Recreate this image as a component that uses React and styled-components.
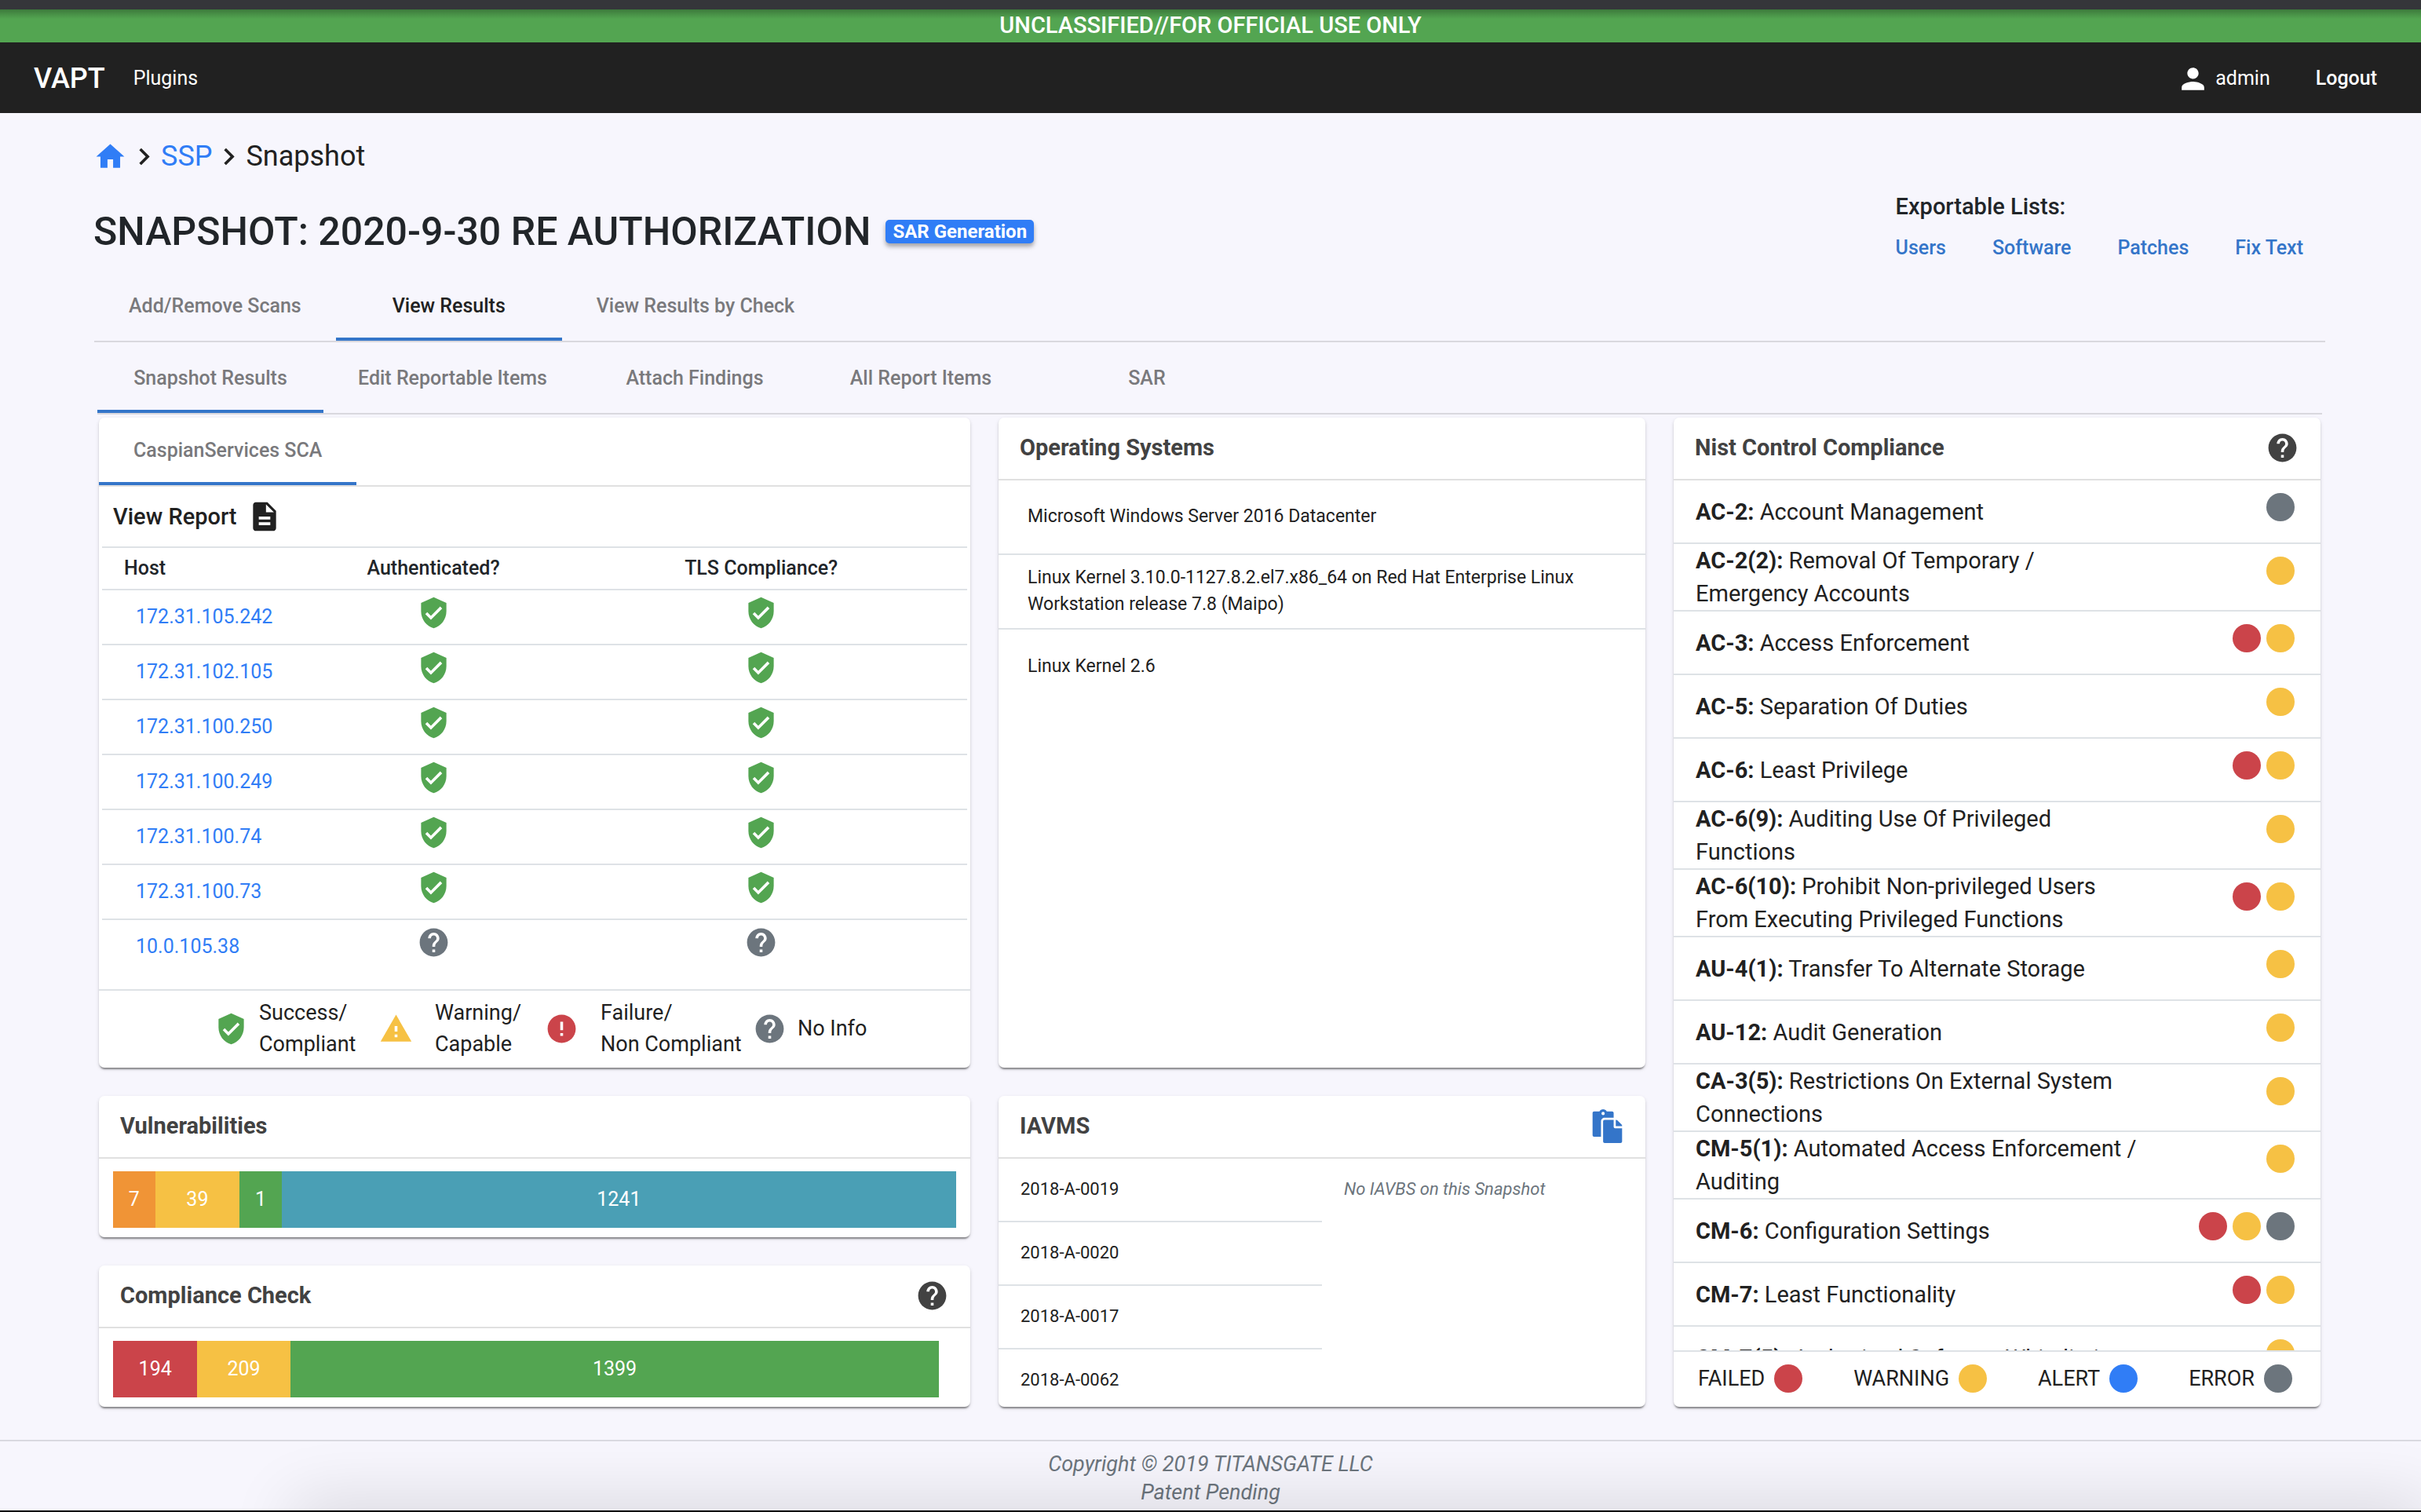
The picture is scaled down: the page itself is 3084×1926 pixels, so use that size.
import React from "react";
import styled, { createGlobalStyle } from "styled-components";
import {
  MdHome,
  MdChevronRight,
  MdPerson,
  MdDescription,
  MdVerifiedUser,
  MdHelp,
  MdWarning,
  MdError,
} from "react-icons/md";
import { FaPaste } from "react-icons/fa";

const color = {
  page: "#f7f6fd",
  ink: "#212121",
  heading: "#212529",
  cardTitle: "#424242",
  mutedTab: "#79797c",
  muted: "#6c757d",
  link: "#307df6",
  accent: "#3475c9",
  green: "#53a551",
  yellow: "#f6c144",
  orange: "#f09436",
  red: "#cb444a",
  teal: "#4a9fb5",
  grey: "#6c757d",
  rule: "#dee2e6",
  headRule: "#e0e0e0",
};

const GlobalStyle = createGlobalStyle`
  *, *::before, *::after { box-sizing: border-box; }
  body {
    margin: 0;
    background: ${color.page};
    color: ${color.ink};
    font-family: Roboto, "Liberation Sans", sans-serif;
    font-size: 25px;
    line-height: 36px;
    overflow: hidden;
  }
  a { color: inherit; text-decoration: none; }
  button { font: inherit; color: inherit; background: none; border: 0; padding: 0; cursor: pointer; }
  h1, h2, p, ul { margin: 0; padding: 0; }
  ul { list-style: none; }
  svg { display: block; flex: none; }
`;

const Chrome = styled.div`
  height: 12px;
  background: #35363a;
`;

const Banner = styled.div`
  height: 42px;
  display: flex;
  align-items: center;
  justify-content: center;
  background: linear-gradient(#3d7a3c, ${color.green} 12px);
  color: #fff;
  font-size: 29px;
  font-weight: 500;
  padding-bottom: 2px;
`;

const Navbar = styled.nav`
  height: 90px;
  padding: 2px 56px 0 43px;
  display: flex;
  align-items: center;
  background: ${color.ink};
  color: #fff;
`;

const Brand = styled.a`
  font-size: 36px;
  font-weight: 500;
  margin-right: 36px;
`;

const NavLink = styled.a`
  font-weight: ${(p) => (p.$strong ? 500 : 400)};
`;

const NavEnd = styled.div`
  margin-left: auto;
  display: flex;
  align-items: center;
  gap: 58px;
`;

const UserLink = styled.a`
  display: flex;
  align-items: center;
  gap: 7px;
`;

const Main = styled.main`
  padding: 32px 122px 42px 119px;
`;

const Breadcrumb = styled.nav`
  display: flex;
  align-items: center;
  height: 46px;
  font-size: 36px;
`;

const HomeLink = styled.a`
  color: ${color.link};
`;

const CrumbLink = styled.a`
  color: ${color.link};
`;

const TitleRow = styled.header`
  display: flex;
  align-items: center;
  justify-content: space-between;
  height: 126px;
  padding-right: 28px;
`;

const TitleGroup = styled.div`
  display: flex;
  align-items: center;
  gap: 19px;
  padding-top: 19px;
`;

const Title = styled.h1`
  font-size: 50px;
  line-height: 60px;
  font-weight: 500;
  color: ${color.heading};
`;

const Badge = styled.span`
  height: 30px;
  padding: 0 9px;
  border-radius: 5px;
  background: ${color.link};
  color: #fff;
  font-size: 24px;
  line-height: 30px;
  font-weight: 700;
  box-shadow: 0 4px 5px rgba(0, 0, 0, 0.26), 0 4px 9px rgba(0, 0, 0, 0.1);
`;

const Exports = styled.section`
  padding-top: 8px;
`;

const ExportsTitle = styled.h2`
  font-size: 29px;
  line-height: 36px;
  font-weight: 500;
  color: ${color.heading};
  margin-bottom: 17px;
`;

const ExportLinks = styled.div`
  display: flex;
  gap: 59px;
  color: ${color.accent};
  font-weight: 500;
`;

const TabBar = styled.div`
  display: flex;
  margin-left: ${(p) => (p.$inset ? 4 : 0)}px;
  margin-right: ${(p) => (p.$inset ? 4 : 0)}px;
  border-bottom: 2px solid rgba(0, 0, 0, 0.12);
`;

const Tab = styled.button`
  height: 86px;
  min-width: 288px;
  padding: 2px 44px 0;
  font-weight: 500;
  color: ${(p) => (p.$dark ? color.ink : color.mutedTab)};
  border-bottom: 4px solid ${(p) => (p.$active ? color.accent : "transparent")};
`;

const TabRows = styled.div`
  display: grid;
  gap: 4px;
  padding-left: 1px;
`;

const Dashboard = styled.div`
  display: grid;
  grid-template-columns: 1110fr 824fr 824fr;
  grid-template-rows: auto auto;
  gap: 36px;
  margin: 4px 6px 0 7px;
`;

const Card = styled.section`
  display: flex;
  flex-direction: column;
  min-width: 0;
  min-height: 0;
  overflow: hidden;
  background: #fff;
  border-radius: 7px;
  box-shadow: 0 4px 2px -2px rgba(0, 0, 0, 0.3), 0 2px 2px rgba(0, 0, 0, 0.14),
    0 2px 5px rgba(0, 0, 0, 0.12);
  grid-row: ${(p) => (p.$tall ? "1 / span 2" : "auto")};
  grid-column: ${(p) => p.$column || "auto"};
`;

const Stack = styled.div`
  display: grid;
  gap: 36px;
`;

const CardHead = styled.header`
  flex: none;
  height: 80px;
  padding: 0 27px 2px;
  display: flex;
  align-items: center;
  justify-content: space-between;
  border-bottom: 2px solid ${color.headRule};
  color: ${color.cardTitle};
`;

const CardTitle = styled.h2`
  font-size: 29px;
  font-weight: 700;
`;

const IconButton = styled.button`
  display: flex;
  color: ${(p) => p.$tone || "inherit"};
`;

const ReportBar = styled.div`
  height: 76px;
  padding-left: 18px;
  display: flex;
  align-items: center;
  gap: 13px;
  font-size: 29px;
  font-weight: 500;
`;

const HostTable = styled.table`
  margin: 0 4px 20px;
  border-spacing: 0;
  table-layout: fixed;
`;

const HeadCell = styled.th`
  width: ${(p) => p.$width || "auto"};
  height: 56px;
  padding: 0 0 0 ${(p) => (p.$first ? "28px" : 0)};
  text-align: ${(p) => (p.$first ? "left" : "center")};
  font-weight: 500;
  color: ${color.heading};
  border-top: 2px solid ${color.rule};
  border-bottom: 2px solid ${color.rule};
`;

const HostRow = styled.tr`
  &:not(:last-child) td {
    height: 70px;
    border-bottom: 2px solid ${color.rule};
  }
`;

const HostCell = styled.td`
  height: 68px;
  padding: 0 0 0 43px;
  color: ${color.link};
`;

const StatusCell = styled.td`
  padding: 7px 0 0;
  vertical-align: top;
  color: ${(p) => p.$tone};
  svg {
    margin: 0 auto;
  }
`;

const Legend = styled.div`
  height: 100px;
  padding: 0 0 2px 147px;
  display: grid;
  grid-template-columns: 210px 211px 265px auto;
  align-items: center;
  border-top: 2px solid ${color.rule};
  font-size: 27px;
  line-height: 40px;
`;

const LegendItem = styled.div`
  display: flex;
  align-items: center;
  gap: ${(p) => (p.$wide ? 28 : 14)}px;
  white-space: pre-line;
  svg {
    color: ${(p) => p.$tone};
  }
`;

const BarBody = styled.div`
  display: flex;
  padding: 16px 18px 12px;
`;

const Segment = styled.div`
  height: 72px;
  display: flex;
  align-items: center;
  justify-content: center;
  background: ${(p) => p.$tone};
  color: #fff;
`;

const OsRow = styled.li`
  min-height: 95px;
  padding: 0 76px 1px 37px;
  display: flex;
  align-items: center;
  font-size: 23px;
  line-height: 34px;
  &:not(:last-child) {
    border-bottom: 2px solid ${color.rule};
  }
`;

const IavmBody = styled.div`
  flex: 1 1 0px;
  min-height: 0;
  overflow-y: auto;
  scrollbar-width: none;
  display: grid;
  grid-template-columns: 1fr 1fr;
  align-items: start;
  font-size: 22px;
`;

const IavmRow = styled.li`
  height: 81px;
  padding: 0 28px 2px;
  display: flex;
  align-items: center;
  border-bottom: 2px solid ${color.rule};
`;

const IavbNote = styled.p`
  padding: 21px 28px;
  font-style: italic;
  color: ${color.muted};
`;

const ControlList = styled.ul`
  flex: 1 1 0px;
  min-height: 0;
  overflow-y: auto;
  scrollbar-width: none;
`;

const ControlRow = styled.li`
  min-height: 81px;
  padding: 0 33px 0 28px;
  display: flex;
  justify-content: space-between;
  align-items: center;
  border-bottom: 2px solid ${color.rule};
  font-size: 29px;
  line-height: 42px;
`;

const ControlName = styled.span`
  flex: 0 0 568px;
`;

const Dots = styled.span`
  display: flex;
  gap: 7px;
  align-self: flex-start;
  padding-top: 16px;
`;

const Dot = styled.i`
  width: 36px;
  height: 36px;
  border-radius: 50%;
  background: ${(p) => p.$tone};
`;

const Key = styled.div`
  flex: none;
  height: 72px;
  padding: 0 36px 3px 31px;
  display: flex;
  justify-content: space-between;
  align-items: center;
  border-top: 2px solid ${color.rule};
  font-size: 27px;
`;

const KeyItem = styled.span`
  display: flex;
  align-items: center;
  gap: 12px;
`;

const Footer = styled.footer`
  height: 92px;
  padding-top: 11px;
  border-top: 2px solid #d9d9e0;
  text-align: center;
  font-size: 27px;
  font-style: italic;
  color: ${color.muted};
`;

const BottomEdge = styled.div`
  position: absolute;
  left: 0;
  right: 0;
  bottom: 0;
  height: 2px;
  background: #000;
`;

const BottomShade = styled.div`
  position: absolute;
  left: 385px;
  right: 0;
  bottom: -38px;
  height: 38px;
  box-shadow: 0 0 84px 12px rgba(0, 0, 0, 0.14);
`;

const FooterWrap = styled.div`
  position: relative;
  overflow: hidden;
`;

const hosts = [
  ["172.31.105.242", true],
  ["172.31.102.105", true],
  ["172.31.100.250", true],
  ["172.31.100.249", true],
  ["172.31.100.74", true],
  ["172.31.100.73", true],
  ["10.0.105.38", false],
];

const vulnerabilities = [
  { count: 7, share: 5, tone: color.orange },
  { count: 39, share: 10, tone: color.yellow },
  { count: 1, share: 5, tone: color.green },
  { count: 1241, share: 80, tone: color.teal },
];

const compliance = [
  { count: 194, share: 10, tone: color.red },
  { count: 209, share: 11, tone: color.yellow },
  { count: 1399, share: 77, tone: color.green },
];

const systems = [
  "Microsoft Windows Server 2016 Datacenter",
  "Linux Kernel 3.10.0-1127.8.2.el7.x86_64 on Red Hat Enterprise Linux Workstation release 7.8 (Maipo)",
  "Linux Kernel 2.6",
];

const iavms = ["2018-A-0019", "2018-A-0020", "2018-A-0017", "2018-A-0062"];

const { red, yellow, grey } = color;
const controls = [
  ["AC-2", "Account Management", [grey]],
  ["AC-2(2)", "Removal Of Temporary / Emergency Accounts", [yellow]],
  ["AC-3", "Access Enforcement", [red, yellow]],
  ["AC-5", "Separation Of Duties", [yellow]],
  ["AC-6", "Least Privilege", [red, yellow]],
  ["AC-6(9)", "Auditing Use Of Privileged Functions", [yellow]],
  ["AC-6(10)", "Prohibit Non-privileged Users From Executing Privileged Functions", [red, yellow]],
  ["AU-4(1)", "Transfer To Alternate Storage", [yellow]],
  ["AU-12", "Audit Generation", [yellow]],
  ["CA-3(5)", "Restrictions On External System Connections", [yellow]],
  ["CM-5(1)", "Automated Access Enforcement / Auditing", [yellow]],
  ["CM-6", "Configuration Settings", [red, yellow, grey]],
  ["CM-7", "Least Functionality", [red, yellow]],
  ["CM-7(5)", "Authorized Software Whitelisting", [yellow]],
];

const keys = [
  ["FAILED", color.red],
  ["WARNING", color.yellow],
  ["ALERT", color.link],
  ["ERROR", color.grey],
];

function StackedBar({ data }) {
  return (
    <BarBody>
      {data.map((d) => (
        <Segment key={d.count} $tone={d.tone} style={{ width: `${d.share}%` }}>
          {d.count}
        </Segment>
      ))}
    </BarBody>
  );
}

function Tabs({ items, active, dark, inset, label }) {
  return (
    <TabBar role="tablist" aria-label={label} $inset={inset}>
      {items.map((name) => (
        <Tab
          key={name}
          role="tab"
          aria-selected={name === active}
          $active={name === active}
          $dark={dark && name === active}
        >
          {name}
        </Tab>
      ))}
    </TabBar>
  );
}

export default function App() {
  return (
    <>
      <GlobalStyle />
      <Chrome />
      <Banner>UNCLASSIFIED//FOR OFFICIAL USE ONLY</Banner>
      <Navbar>
        <Brand href="#">VAPT</Brand>
        <NavLink href="#plugins">Plugins</NavLink>
        <NavEnd>
          <UserLink href="#user">
            <MdPerson size={43} />
            admin
          </UserLink>
          <NavLink href="#logout" $strong>
            Logout
          </NavLink>
        </NavEnd>
      </Navbar>

      <Main>
        <Breadcrumb aria-label="Breadcrumb">
          <HomeLink href="#home" aria-label="Home">
            <MdHome size={43} />
          </HomeLink>
          <MdChevronRight size={43} />
          <CrumbLink href="#ssp">SSP</CrumbLink>
          <MdChevronRight size={43} />
          <span>Snapshot</span>
        </Breadcrumb>

        <TitleRow>
          <TitleGroup>
            <Title>SNAPSHOT: 2020-9-30 RE AUTHORIZATION</Title>
            <Badge>SAR Generation</Badge>
          </TitleGroup>
          <Exports>
            <ExportsTitle>Exportable Lists:</ExportsTitle>
            <ExportLinks>
              <a href="#users">Users</a>
              <a href="#software">Software</a>
              <a href="#patches">Patches</a>
              <a href="#fix-text">Fix Text</a>
            </ExportLinks>
          </Exports>
        </TitleRow>

        <TabRows>
          <Tabs
            label="Snapshot sections"
            items={["Add/Remove Scans", "View Results", "View Results by Check"]}
            active="View Results"
            dark
          />
          <Tabs
            label="Result sections"
            items={["Snapshot Results", "Edit Reportable Items", "Attach Findings", "All Report Items", "SAR"]}
            active="Snapshot Results"
            inset
          />
        </TabRows>

        <Dashboard>
          <Card>
            <Tabs label="Scans" items={["CaspianServices SCA"]} active="CaspianServices SCA" />
            <ReportBar>
              View Report
              <IconButton aria-label="Open report">
                <MdDescription size={44} />
              </IconButton>
            </ReportBar>
            <HostTable>
              <thead>
                <tr>
                  <HeadCell $first $width="24.2%">Host</HeadCell>
                  <HeadCell $width="28.2%">Authenticated?</HeadCell>
                  <HeadCell>TLS Compliance?</HeadCell>
                </tr>
              </thead>
              <tbody>
                {hosts.map(([ip, ok]) => {
                  const Icon = ok ? MdVerifiedUser : MdHelp;
                  const tone = ok ? color.green : color.grey;
                  return (
                    <HostRow key={ip}>
                      <HostCell>
                        <a href={`#host-${ip}`}>{ip}</a>
                      </HostCell>
                      <StatusCell $tone={tone}>
                        <Icon size={43} />
                      </StatusCell>
                      <StatusCell $tone={tone}>
                        <Icon size={43} />
                      </StatusCell>
                    </HostRow>
                  );
                })}
              </tbody>
            </HostTable>
            <Legend>
              <LegendItem $tone={color.green}>
                <MdVerifiedUser size={43} />
                {"Success/\nCompliant"}
              </LegendItem>
              <LegendItem $tone={color.yellow} $wide>
                <MdWarning size={43} />
                {"Warning/\nCapable"}
              </LegendItem>
              <LegendItem $tone={color.red} $wide>
                <MdError size={43} />
                {"Failure/\nNon Compliant"}
              </LegendItem>
              <LegendItem $tone={color.grey}>
                <MdHelp size={43} />
                No Info
              </LegendItem>
            </Legend>
          </Card>

          <Card>
            <CardHead>
              <CardTitle>Operating Systems</CardTitle>
            </CardHead>
            <ul>
              {systems.map((s) => (
                <OsRow key={s}>{s}</OsRow>
              ))}
            </ul>
          </Card>

          <Card $tall $column="3">
            <CardHead>
              <CardTitle>Nist Control Compliance</CardTitle>
              <IconButton aria-label="About control compliance">
                <MdHelp size={43} />
              </IconButton>
            </CardHead>
            <ControlList>
              {controls.map(([id, name, tones]) => (
                <ControlRow key={id}>
                  <ControlName>
                    <b>{id}:</b> {name}
                  </ControlName>
                  <Dots>
                    {tones.map((t) => (
                      <Dot key={t} $tone={t} />
                    ))}
                  </Dots>
                </ControlRow>
              ))}
            </ControlList>
            <Key>
              {keys.map(([name, tone]) => (
                <KeyItem key={name}>
                  {name}
                  <Dot $tone={tone} />
                </KeyItem>
              ))}
            </Key>
          </Card>

          <Stack>
            <Card>
              <CardHead>
                <CardTitle>Vulnerabilities</CardTitle>
              </CardHead>
              <StackedBar data={vulnerabilities} />
            </Card>
            <Card>
              <CardHead>
                <CardTitle>Compliance Check</CardTitle>
                <IconButton aria-label="About compliance check">
                  <MdHelp size={43} />
                </IconButton>
              </CardHead>
              <StackedBar data={compliance} />
            </Card>
          </Stack>

          <Card>
            <CardHead>
              <CardTitle>IAVMS</CardTitle>
              <IconButton aria-label="Copy list" $tone={color.accent}>
                <FaPaste size={43} />
              </IconButton>
            </CardHead>
            <IavmBody>
              <ul>
                {iavms.map((id) => (
                  <IavmRow key={id}>{id}</IavmRow>
                ))}
              </ul>
              <IavbNote>No IAVBS on this Snapshot</IavbNote>
            </IavmBody>
          </Card>
        </Dashboard>
      </Main>

      <FooterWrap>
        <Footer>
          <p>Copyright © 2019 TITANSGATE LLC</p>
          <p>Patent Pending</p>
        </Footer>
        <BottomShade />
        <BottomEdge />
      </FooterWrap>
    </>
  );
}
